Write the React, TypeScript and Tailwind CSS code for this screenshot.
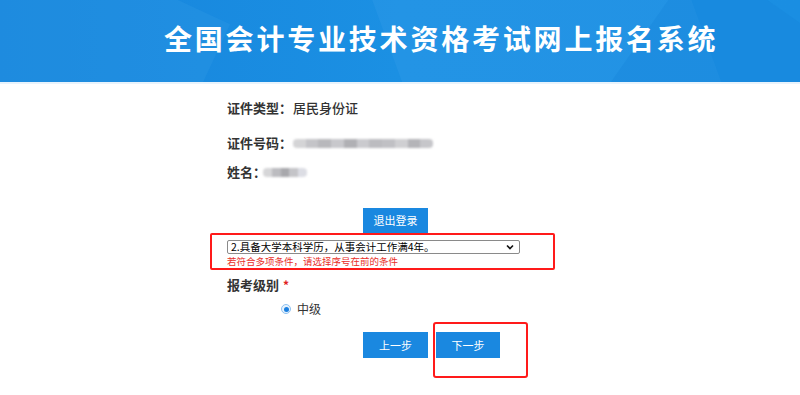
import React from "react";

const cjk = { fontFamily: '"Microsoft YaHei","Noto Sans CJK SC","Noto Sans",sans-serif' };

function Blur({ w, shades }: { w: number; shades: string[] }) {
  return (
    <div className="flex h-[9px] blur-[1px] rounded-sm overflow-hidden shrink-0" style={{ width: w }}>
      {shades.map((c, i) => (
        <div key={i} className="flex-1 h-full" style={{ background: c }} />
      ))}
    </div>
  );
}

export default function App() {
  return (
    <div className="w-[800px] h-[395px] bg-white overflow-hidden relative" style={cjk}>
      {/* header */}
      <div className="relative h-[82px] bg-gradient-to-r from-[#1784dc] via-[#1b90e3] to-[#1a8ee2] overflow-hidden">
        <div className="absolute left-[-60px] top-[-40px] w-[260px] h-[200px] bg-[#2a95e4] opacity-40 rotate-[25deg]" />
        <div className="absolute left-[400px] top-[-60px] w-[300px] h-[220px] bg-[#3aa0ea] opacity-25 rotate-[-20deg]" />
        <div className="absolute left-[620px] top-[10px] w-[260px] h-[200px] bg-[#1380d8] opacity-30 rotate-[35deg]" />
        <div className="relative flex items-center h-full pl-[164px] pb-[6px]">
          <span className="text-white font-bold text-[28px] tracking-[2.8px] leading-none whitespace-nowrap">
            全国会计专业技术资格考试网上报名系统
          </span>
        </div>
      </div>
      <div className="h-[2px] bg-[#e8f3fc]" />

      {/* body */}
      <div className="flex flex-col">
        <div className="ml-[227px] mt-[15px] flex items-center h-[18px] text-[13px] text-[#333] whitespace-nowrap">
          <span className="font-bold w-[66px] shrink-0">证件类型：</span>
          <span className="font-medium">居民身份证</span>
        </div>
        <div className="ml-[227px] mt-[17px] flex items-center h-[18px] text-[13px] text-[#333] whitespace-nowrap">
          <span className="font-bold w-[66px] shrink-0">证件号码：</span>
          <Blur w={140} shades={["#d4d4d6", "#c4c4c8", "#b8b8bc", "#c8c8cc", "#b0b0b4", "#cacace", "#bcbcc0", "#c0c0c4", "#cfcfd2", "#b4b4b8", "#c6c6ca"]} />
        </div>
        <div className="ml-[227px] mt-[11px] flex items-center h-[18px] text-[13px] text-[#333] whitespace-nowrap">
          <span className="font-bold w-[36px] shrink-0">姓名：</span>
          <Blur w={44} shades={["#d6d6d8", "#bcbcc0", "#a8a8ac", "#c4c4c8", "#dcdde4"]} />
        </div>

        <div className="ml-[363px] mt-[27px] w-[65px] h-[25px] bg-[#1a88e0] text-white text-[11px] flex items-center justify-center">
          退出登录
        </div>

        <div className="ml-[210px] w-[345px] h-[37px] border-2 border-[#ff1a1a] rounded-[2px] pl-[15px] pt-[5px]">
          <div className="w-[293px] h-[14px] border border-[#8a8a8a] rounded-[2px] bg-white flex items-center justify-between pl-[3px] pr-[5px]">
            <span className="text-[10.5px] leading-none text-black whitespace-nowrap">2.具备大学本科学历，从事会计工作满4年。</span>
            <svg width="8" height="6" viewBox="0 0 8 6">
              <path d="M1 1.5 L4 4.5 L7 1.5" fill="none" stroke="#111" strokeWidth="1.6" />
            </svg>
          </div>
          <div className="text-[9.5px] leading-none text-[#e8302a] mt-[3px] whitespace-nowrap">若符合多项条件，请选择序号在前的条件</div>
        </div>

        <div className="ml-[227px] mt-[6px] h-[18px] flex items-center text-[13px] text-[#333] font-bold">
          报考级别<span className="text-[#e02020] ml-[4px] text-[12px]">*</span>
        </div>

        <div className="ml-[281px] mt-[8px] h-[14px] flex items-center gap-[6px] text-[12px] text-[#333]">
          <div className="w-[10px] h-[10px] rounded-full border border-[#8fc1f0] bg-[#e6f2fd] flex items-center justify-center">
            <div className="w-[5px] h-[5px] rounded-full bg-[#1a7fe0]" />
          </div>
          <span>中级</span>
        </div>

        <div className="ml-[363px] mt-[16px] flex gap-[8px]">
          <div className="w-[65px] h-[26px] bg-[#1a88e0] text-white text-[11px] flex items-center justify-center">上一步</div>
          <div className="w-[64px] h-[26px] bg-[#1a88e0] text-white text-[11px] flex items-center justify-center">下一步</div>
        </div>
      </div>

      {/* annotation box */}
      <div className="absolute left-[433px] top-[322px] w-[95px] h-[56px] border-2 border-[#ff1a1a] rounded-[3px]" />
    </div>
  );
}
